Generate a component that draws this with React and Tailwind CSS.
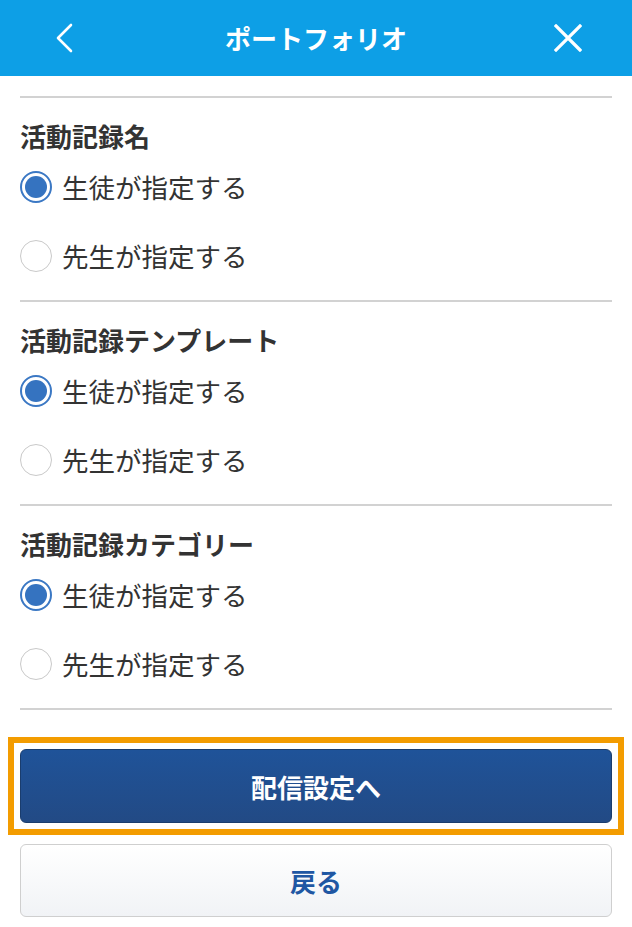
import { useState } from 'react'

const sections = [
  { key: 'name', title: '活動記録名' },
  { key: 'template', title: '活動記録テンプレート' },
  { key: 'category', title: '活動記録カテゴリー' },
]

const options = [
  { value: 'student', label: '生徒が指定する' },
  { value: 'teacher', label: '先生が指定する' },
]

const Radio = ({ checked }) => (
  <span
    className={`flex h-[32px] w-[32px] shrink-0 items-center justify-center rounded-full bg-white ${
      checked ? 'border-[2px] border-[#3b78c4]' : 'border-[1.5px] border-[#c9c9c9]'
    }`}
  >
    {checked && <span className="h-[22px] w-[22px] rounded-full bg-[#3573c0]" />}
  </span>
)

const App = () => {
  const [values, setValues] = useState({ name: 'student', template: 'student', category: 'student' })

  return (
    <div className="min-h-screen bg-white font-['Noto_Sans_CJK_JP','Noto_Sans',sans-serif] text-[#333]">
      {/* Header */}
      <header className="flex h-[76px] items-center justify-between bg-[#0d9fe6] px-[34px]">
        <button className="flex h-[44px] w-[60px] items-center justify-center">
          <svg width="19" height="30" viewBox="0 0 19 30" fill="none">
            <path d="M16 2L3 15l13 13" stroke="white" strokeWidth="2.6" strokeLinecap="round" strokeLinejoin="round" />
          </svg>
        </button>
        <h1 className="text-[26px] font-bold leading-none text-white">ポートフォリオ</h1>
        <button className="flex h-[44px] w-[60px] items-center justify-center">
          <svg width="28" height="28" viewBox="0 0 28 28" fill="none">
            <path d="M2 2l24 24M26 2L2 26" stroke="white" strokeWidth="3.2" strokeLinecap="square" />
          </svg>
        </button>
      </header>

      <div className="px-[20px] pt-[20px]">
        {sections.map((s) => (
          <div key={s.key}>
            <div className="h-[2px] bg-[#d2d2d2]" />
            <div className="pt-[20px] pb-[19px]">
              <h2 className="mb-[8px] text-[26px] font-bold leading-[36px] text-[#333]">{s.title}</h2>
              <div className="flex flex-col gap-[19px]">
                {options.map((o) => (
                  <label
                    key={o.value}
                    className="flex h-[50px] cursor-pointer items-center gap-[10px]"
                    onClick={() => setValues({ ...values, [s.key]: o.value })}
                  >
                    <Radio checked={values[s.key] === o.value} />
                    <span className="text-[26.5px] leading-none text-[#333]">{o.label}</span>
                  </label>
                ))}
              </div>
            </div>
          </div>
        ))}
        <div className="h-[2px] bg-[#d2d2d2]" />
      </div>

      {/* Buttons */}
      <div className="mt-[27px] px-[8px]">
        <div className="border-[6px] border-[#f39c00] p-[6px]">
          <button className="flex h-[74px] w-full items-center justify-center rounded-[6px] border border-[#1a3d6e] bg-gradient-to-b from-[#1f5399] to-[#224a85] text-[26px] font-bold text-white">
            配信設定へ
          </button>
        </div>
      </div>
      <div className="mt-[9px] px-[20px] pb-[10px]">
        <button className="flex h-[73px] w-full items-center justify-center rounded-[6px] border-[1.5px] border-[#cfcfcf] bg-gradient-to-b from-white to-[#f1f3f6] text-[26px] font-bold text-[#1f57a3]">
          戻る
        </button>
      </div>
    </div>
  )
}

export default App
